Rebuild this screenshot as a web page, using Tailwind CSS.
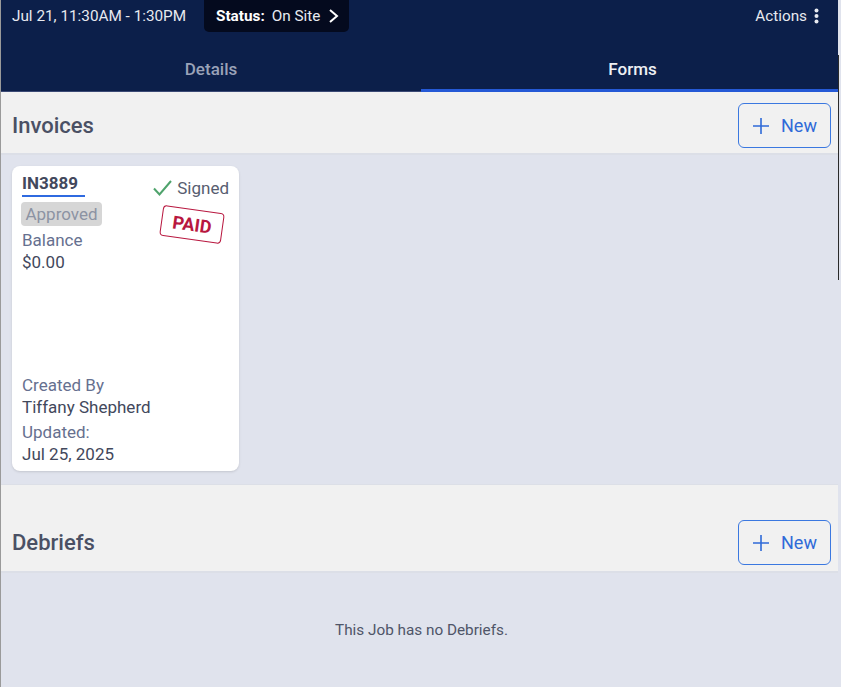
<!DOCTYPE html>
<html lang="en">

<head>
    <meta charset="UTF-8">
    <meta name="viewport" content="width=device-width, initial-scale=1.0">
    <title>Job Forms</title>
    <script src="https://cdn.jsdelivr.net/npm/@tailwindcss/browser@4"></script>
</head>

<body class="relative h-[687px] overflow-hidden bg-[#e0e3ed] font-['Roboto',sans-serif] border-l border-[#9a9a9a]">

    <!-- Job header -->
    <header class="bg-[#0c1f4a] h-[92px] mr-[3px] flex flex-col">
        <div class="h-[32px] flex items-center pl-[11px] pr-[19px] text-[15.3px] text-[#e8eaf0]">
            <span class="w-[192px] whitespace-nowrap">Jul 21, 11:30AM - 1:30PM</span>
            <div class="w-[145px] h-[32px] bg-[#040a1e] rounded-b-[5px] flex items-center pl-[12px] whitespace-nowrap">
                <span class="font-bold text-white mr-[7px]">Status:</span>
                <span>On Site</span>
                <svg class="ml-[8px]" width="12" height="16" viewBox="0 0 12 16" fill="none" stroke="#fff" stroke-width="2"><path d="M2 2l7 6-7 6" /></svg>
            </div>
            <div class="ml-auto flex items-center gap-[7px]">
                <span>Actions</span>
                <svg width="5" height="16" viewBox="0 0 5 16" fill="#e8eaf0"><circle cx="2.5" cy="2.5" r="2" /><circle cx="2.5" cy="8" r="2" /><circle cx="2.5" cy="13.5" r="2" /></svg>
            </div>
        </div>
        <div class="flex-1 flex text-[17px] font-medium">
            <div class="w-[420px] flex items-center justify-center pt-[16px] text-[#9aa2b8] border-b border-[#3b4a75]">Details</div>
            <div class="flex-1 flex items-center justify-center pt-[18px] pl-[6px] text-[#eef0f4] border-b-[3px] border-[#2559d6]">Forms</div>
        </div>
    </header>

    <main class="mr-[3px]">
        <!-- Invoices -->
        <section class="h-[63px] bg-[#f1f1f1] border-b-2 border-[#dcdfe7] flex items-center justify-between pl-[11px] pr-[7px] pt-[6px]">
            <h2 class="text-[22px] font-medium text-[#4a5064]">Invoices</h2>
            <button class="w-[93px] h-[45px] border border-[#3b78e0] rounded-[6px] flex items-center justify-center gap-[11px] text-[18px] text-[#2f6ad8]">
                <svg width="18" height="18" viewBox="0 0 18 18" stroke="#2f6ad8" stroke-width="1.6"><path d="M9 1v16M1 9h16" /></svg>
                New
            </button>
        </section>

        <div class="h-[329px] px-[11px] pt-[11px] bg-[#e0e3ed]">
            <article class="w-[227px] h-[305px] bg-white rounded-[8px] shadow-sm pl-[10px] pr-[9px] flex flex-col text-[17px]">
                <div class="flex justify-between">
                    <div>
                        <div class="w-[63px] h-[31px] pt-[8px] border-b-[2px] border-[#2f6ae0] font-bold text-[#42485c] leading-[19px] whitespace-nowrap">IN3889</div>
                        <span class="block -ml-[1px] mt-[5px] w-[81px] h-[24px] bg-[#d6d6d6] rounded-[4px] text-center leading-[24px] text-[#8c93a3]">Approved</span>
                    </div>
                    <div class="flex flex-col items-end">
                        <div class="flex items-center gap-[5px] pt-[12px] text-[#575d70] leading-[20px] mr-[1px]">
                            <svg width="19" height="16" viewBox="0 0 19 16" fill="none" stroke="#4fa36c" stroke-width="2"><path d="M1 8.500l5.500 6L18 1" /></svg>
                            Signed
                        </div>
                        <div class="mt-[11px] mb-[1px] mr-[7px] w-[62px] h-[31px] border border-[#b8173f] rounded-[4px] rotate-[8deg] flex items-center justify-center text-[#b8173f] text-[18px] font-bold">PAID</div>
                    </div>
                </div>
                <div class="mt-[-11px] text-[#66708f] leading-[20px]">Balance</div>
                <div class="mt-[2px] text-[#42485c] leading-[20px]">$0.00</div>
                <div class="mt-auto text-[#66708f] leading-[20px]">Created By</div>
                <div class="mt-[2px] text-[#42485c] leading-[20px]">Tiffany Shepherd</div>
                <div class="mt-[5px] text-[#66708f] leading-[20px]">Updated:</div>
                <div class="mt-[2px] mb-[7px] text-[#42485c] leading-[20px]">Jul 25, 2025</div>
            </article>
        </div>

        <!-- Debriefs -->
        <section class="h-[89px] bg-[#f1f1f1] border-b-2 border-t border-[#dcdfe7] flex items-end justify-between pl-[11px] pr-[7px] pb-[6px]">
            <h2 class="text-[22px] font-medium text-[#4a5064] mb-[6px]">Debriefs</h2>
            <button class="w-[93px] h-[45px] border border-[#3b78e0] rounded-[6px] flex items-center justify-center gap-[11px] text-[18px] text-[#2f6ad8]">
                <svg width="18" height="18" viewBox="0 0 18 18" stroke="#2f6ad8" stroke-width="1.6"><path d="M9 1v16M1 9h16" /></svg>
                New
            </button>
        </section>

        <p class="pt-[46px] pl-[4px] text-center text-[15.3px] text-[#4f5568]">This Job has no Debriefs.</p>
    </main>

    <!-- scrollbar thumb on the right edge -->
    <div class="absolute right-[2px] top-[55px] w-[1px] h-[225px] bg-[#2a2a2a]"></div>

</body>

</html>
